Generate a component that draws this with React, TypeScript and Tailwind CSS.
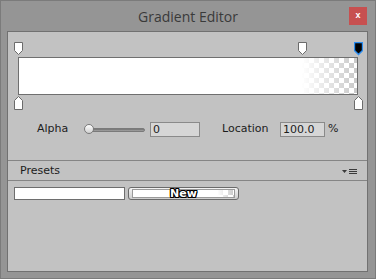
import React from 'react';

const ui = "font-['DejaVu_Sans',sans-serif]";

function TopMarker({ selected }: { selected?: boolean }) {
  return (
    <svg width="9" height="14" viewBox="0 0 9 14">
      <path
        d="M0.5 0.5H8.5V8.5L4.5 12.5L0.5 8.5Z"
        fill={selected ? '#000' : '#fff'}
        stroke={selected ? '#2a8cf0' : '#6b6b6b'}
        strokeWidth={selected ? 1.4 : 1}
      />
    </svg>
  );
}

function BottomMarker() {
  return (
    <svg width="9" height="14" viewBox="0 0 9 14">
      <path d="M4.5 0.5L8.5 4.5V13.5H0.5V4.5Z" fill="#fff" stroke="#6b6b6b" />
    </svg>
  );
}

function GradientFill({ stop }: { stop: string }) {
  return (
    <div className="h-full w-full bg-[conic-gradient(#c9c9c9_25%,#ffffff_0_50%,#c9c9c9_0_75%,#ffffff_0)] bg-[length:10px_10px]">
      <div className={`h-full w-full ${stop}`} />
    </div>
  );
}

export default function App() {
  return (
    <div className={`w-[376px] h-[279px] bg-[#959595] border border-[#7b7b7b] flex flex-col ${ui}`}>
      {/* Title bar */}
      <div className="h-[30px] grid grid-cols-[1fr_auto_1fr] items-center">
        <div />
        <div className="font-['Open_Sans',sans-serif] text-[14px] text-[#3a3a3a] pt-[1px]">Gradient Editor</div>
        <div className="flex justify-end pr-[8px]">
          <div className="w-[18px] h-[18px] bg-[#c75050] flex items-center justify-center text-white text-[9px] font-bold leading-none pb-[1px] font-['Liberation_Sans',sans-serif]">
            x
          </div>
        </div>
      </div>

      {/* Panel */}
      <div className="ml-[6px] mr-[7px] mb-[6px] flex-1 border border-[#717171] bg-[#c2c2c2] flex flex-col">
        <div className="pl-[10px]">
          <div className="relative w-[340px] h-[15px] mt-[10px]">
            <div className="absolute top-0 left-[-4px]"><TopMarker /></div>
            <div className="absolute top-0 left-[280px]"><TopMarker /></div>
            <div className="absolute top-0 left-[336px]"><TopMarker selected /></div>
          </div>
          <div className="w-[340px] h-[38px] border border-[#6f6f6f]">
            <GradientFill stop="bg-[linear-gradient(to_right,#ffffff_83.5%,rgba(255,255,255,0))]" />
          </div>
          <div className="relative w-[340px] h-[15px]">
            <div className="absolute top-[1px] left-[-4px]"><BottomMarker /></div>
            <div className="absolute top-[1px] left-[336px]"><BottomMarker /></div>
          </div>
        </div>

        {/* Alpha / Location */}
        <div className="mt-[12px] h-[15px] flex items-center pl-[29px] text-[11px] text-[#1c1c1c]">
          <span className="w-[47px]">Alpha</span>
          <div className="relative w-[61px] h-[15px] flex items-center">
            <div className="ml-[4px] w-[57px] h-[4px] rounded-full bg-[linear-gradient(#6e6e6e,#a5a5a5)] border border-[#7a7a7a]" />
            <div className="absolute left-0 top-[2px] w-[10px] h-[10px] rounded-full border border-[#7a7a7a] bg-[linear-gradient(#ffffff,#cfcfcf)]" />
          </div>
          <div className="ml-[5px] w-[50px] h-[15px] border border-[#8a8a8a] bg-[#d6d6d6] pl-[2px] leading-[13px]">0</div>
          <span className="ml-[22px] w-[58px]">Location</span>
          <div className="w-[45px] h-[15px] border border-[#8a8a8a] bg-[#d6d6d6] pl-[2px] leading-[13px]">100.0</div>
          <span className="ml-[3px]">%</span>
        </div>

        {/* Presets header */}
        <div className="mt-[23px] h-[21px] border-y border-[#858585] flex items-center justify-between pl-[12px] pr-[10px] pt-[2px] text-[11px] text-[#1c1c1c]">
          <span>Presets</span>
          <div className="flex items-center gap-[2px]">
            <svg width="5" height="3" viewBox="0 0 5 3">
              <path d="M0 0H5L2.5 3Z" fill="#3a3a3a" />
            </svg>
            <div className="flex flex-col gap-[1px]">
              <div className="w-[8px] h-[1px] bg-[#3a3a3a]" />
              <div className="w-[8px] h-[1px] bg-[#3a3a3a]" />
              <div className="w-[8px] h-[1px] bg-[#3a3a3a]" />
            </div>
          </div>
        </div>

        {/* Presets row */}
        <div className="mt-[6px] flex pl-[6px]">
          <div className="w-[111px] h-[13px] border border-[#6e6e6e] bg-white" />
          <div className="ml-[3px] w-[111px] h-[13px] rounded-[3px] border border-[#6a6a6a] bg-[linear-gradient(#f4f4f4,#cdcdcd)] px-[3px] py-[1px]">
            <div className="relative h-full border border-[#9a9a9a]">
              <GradientFill stop="bg-[linear-gradient(to_right,#ffffff_83.5%,rgba(255,255,255,0))]" />
              <div className="absolute inset-0 flex items-center justify-center text-[11px] font-bold leading-none text-white [text-shadow:1px_0_#000,-1px_0_#000,0_1px_#000,0_-1px_#000,1px_1px_#000,-1px_-1px_#000,1px_-1px_#000,-1px_1px_#000]">
                New
              </div>
            </div>
          </div>
        </div>
      </div>
    </div>
  );
}
